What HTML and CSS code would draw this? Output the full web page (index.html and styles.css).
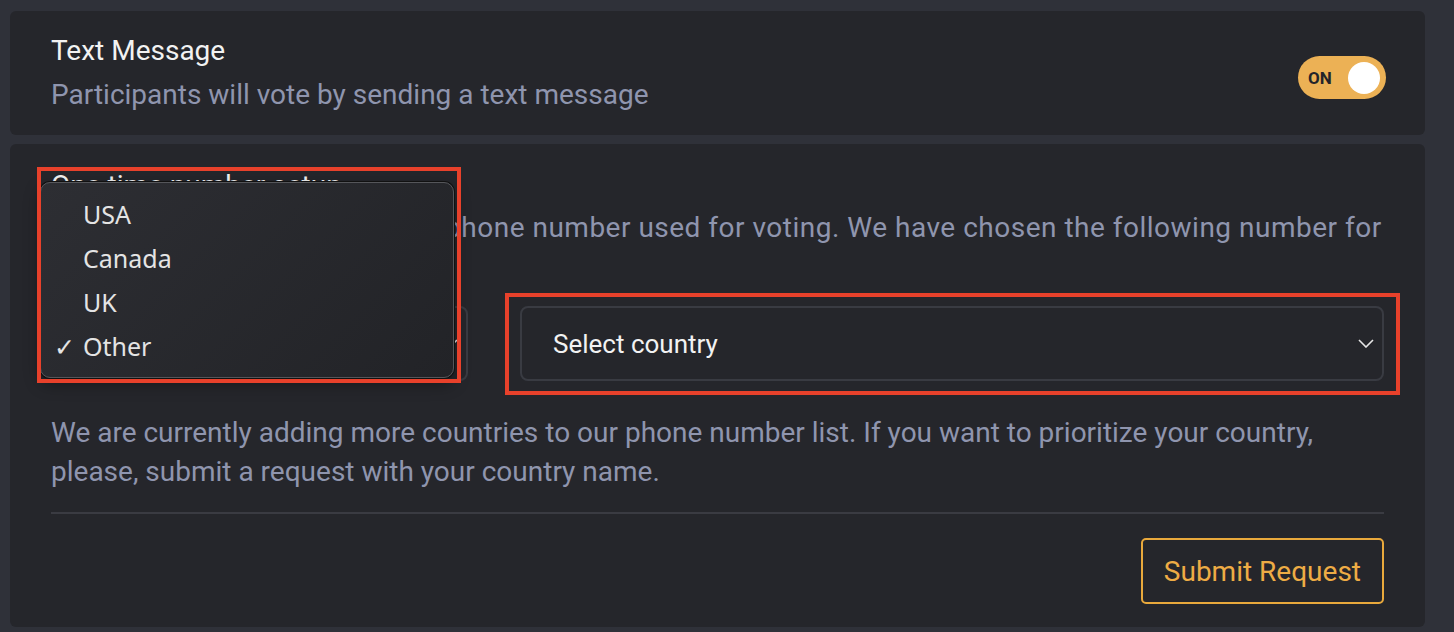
FILE: index.html
```html
<!DOCTYPE html>
<html lang="en">
<head>
    <meta charset="UTF-8">
    <meta name="viewport" content="width=device-width, initial-scale=1.0">
    <title>Voting setup</title>
    <link rel="stylesheet" href="styles.css">
</head>
<body>
<div class="card card-method">
    <div>
        <h2 class="card-title">Text Message</h2>
        <p class="card-sub">Participants will vote by sending a text message</p>
    </div>
    <div class="toggle">
        <span class="toggle-label">ON</span>
        <span class="toggle-knob"></span>
    </div>
</div>

<div class="card card-setup">
    <h2 class="card-title">One time number setup</h2>
    <p class="card-sub desc">Next, select the country of the phone number used for voting. We have chosen the following number for you.</p>

    <div class="select-row">
        <div class="select select-type">
            <span>Other</span>
            <svg class="chevron" viewBox="0 0 16 9"><path d="M1 1l7 7 7-7" fill="none" stroke="#e6e6e6" stroke-width="1.6"/></svg>
        </div>
        <div class="select select-country">
            <span>Select country</span>
            <svg class="chevron" viewBox="0 0 16 9"><path d="M1 1l7 7 7-7" fill="none" stroke="#e6e6e6" stroke-width="1.6"/></svg>
        </div>
    </div>

    <p class="card-sub note">We are currently adding more countries to our phone number list. If you want to prioritize your country, please, submit a request with your country name.</p>
    <hr class="divider">
    <div class="actions">
        <button class="btn-outline">Submit Request</button>
    </div>

    <ul class="dropdown">
        <li>USA</li>
        <li>Canada</li>
        <li>UK</li>
        <li class="checked">Other</li>
    </ul>
    <div class="mark mark-left"></div>
    <div class="mark mark-right"></div>
</div>
</body>
</html>
```

FILE: styles.css
```css
body {
    margin: 0;
    padding: 11px 29px 0 10px;
    background: #2f3139;
    font-family: Roboto, "Liberation Sans", sans-serif;
}
.card {
    background: #25262b;
    border-radius: 6px;
    box-sizing: border-box;
}
.card-method {
    height: 124px;
    padding: 0 39px 0 41px;
    display: flex;
    align-items: center;
    justify-content: space-between;
}
.card-title {
    margin: 0;
    font-size: 28px;
    font-weight: 400;
    line-height: 44px;
    color: #f2f2f2;
}
.card-sub {
    margin: 0;
    font-size: 28px;
    line-height: 44px;
    color: #8f95ae;
}
.toggle {
    width: 88px;
    height: 43px;
    margin-top: 9px;
    border-radius: 22px;
    background: #ecb155;
    display: flex;
    align-items: center;
    justify-content: space-between;
    padding: 0 6px 0 10px;
    box-sizing: border-box;
}
.toggle-label {
    font-size: 17px;
    font-weight: 700;
    color: #23242a;
}
.toggle-knob {
    width: 32px;
    height: 32px;
    border-radius: 50%;
    background: #fff;
}
.card-setup {
    margin-top: 9px;
    height: 483px;
    padding: 20px 41px 0 41px;
    position: relative;
}
.desc,
.note {
    line-height: 39px;
}
.desc {
    letter-spacing: 0.5px;
}
.select-row {
    display: flex;
    gap: 52px;
    margin-top: 20px;
}
.select {
    height: 75px;
    border: 2px solid #393b42;
    border-radius: 8px;
    box-sizing: border-box;
    display: flex;
    align-items: center;
    justify-content: space-between;
    padding: 0 8px 0 31px;
    font-size: 26px;
    color: #f2f2f2;
}
.select-type {
    width: 417px;
}
.select-country {
    flex: 1;
}
.chevron {
    width: 16px;
    height: 9px;
}
.note {
    margin-top: 32px;
}
.divider {
    border: none;
    border-top: 2px solid #3a3b42;
    margin: 21px 0 0;
}
.actions {
    display: flex;
    justify-content: flex-end;
    margin-top: 24px;
}
.btn-outline {
    background: transparent;
    border: 2px solid #e9a93c;
    border-radius: 5px;
    color: #eeac45;
    font-family: Roboto, "Liberation Sans", sans-serif;
    font-size: 28px;
    height: 66px;
    padding: 0 21px;
    margin-right: 0;
}
.dropdown {
    position: absolute;
    left: 30px;
    top: 38px;
    width: 414px;
    height: 196px;
    box-sizing: border-box;
    margin: 0;
    padding: 9px 0 0;
    list-style: none;
    background: linear-gradient(135deg, #2d2e33, #222327);
    border: 1px solid #55565a;
    border-radius: 10px;
    box-shadow: 0 0 0 1px #111, 0 6px 16px rgba(0, 0, 0, 0.4);
    font-family: "Noto Sans", Roboto, sans-serif;
}
.dropdown li {
    height: 44px;
    line-height: 44px;
    padding-left: 42px;
    font-size: 25px;
    color: #e4e4e4;
    position: relative;
}
.dropdown .checked::before {
    content: "\2713";
    position: absolute;
    left: 13px;
}
.mark {
    position: absolute;
    border: 4px solid #e8412b;
    box-sizing: border-box;
}
.mark-left {
    left: 27px;
    top: 23px;
    width: 424px;
    height: 216px;
}
.mark-right {
    left: 495px;
    top: 149px;
    width: 895px;
    height: 102px;
}
```
